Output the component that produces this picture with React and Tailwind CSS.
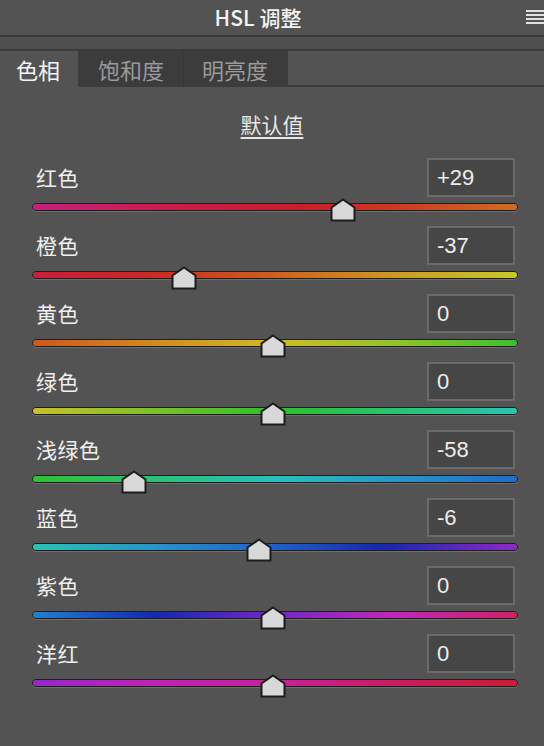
import React from "react";

const rows = [
  { label: "红色", value: 29, grad: "bg-[linear-gradient(to_right,#c4207e,#cc1c48_30%,#cc1c2c_55%,#cc3a22_75%,#d06c22)]" },
  { label: "橙色", value: -37, grad: "bg-[linear-gradient(to_right,#cc1c3a,#cc2a22_25%,#d0601e_50%,#cc9a22_75%,#c8c828)]" },
  { label: "黄色", value: 0, grad: "bg-[linear-gradient(to_right,#d0561e,#d08a20_25%,#d0bc22_50%,#90c428_75%,#3cc030)]" },
  { label: "绿色", value: 0, grad: "bg-[linear-gradient(to_right,#c8c028,#7cc02a_25%,#2ec02c_50%,#28c470_75%,#2ac4b4)]" },
  { label: "浅绿色", value: -58, grad: "bg-[linear-gradient(to_right,#30c030,#2cc078_25%,#28c0bc_50%,#2896c8_75%,#206cc8)]" },
  { label: "蓝色", value: -6, grad: "bg-[linear-gradient(to_right,#28c4b4,#2894c8_25%,#2060c8_50%,#1428b0_72%,#9028c8)]" },
  { label: "紫色", value: 0, grad: "bg-[linear-gradient(to_right,#2082d0,#1428b4_25%,#7428c8_50%,#c228b8_75%,#d02064)]" },
  { label: "洋红", value: 0, grad: "bg-[linear-gradient(to_right,#9428c8,#c024b4_25%,#c8209a_50%,#cc1c62_75%,#cc1c34)]" },
];

const fmt = (v) => (v > 0 ? `+${v}` : `${v}`);

function Thumb({ value }) {
  const center = 241 + value * 2.4;
  return (
    <svg
      width="26"
      height="24"
      viewBox="0 0 26 24"
      className="absolute top-[-5px]"
      style={{ left: `${center - 13}px` }}
    >
      <polygon
        points="13,1.5 24.5,9.5 24.5,22.5 1.5,22.5 1.5,9.5"
        fill="#d8d8d8"
        stroke="#1c1c1c"
        strokeWidth="2"
        strokeLinejoin="miter"
      />
    </svg>
  );
}

function Row({ label, value, grad }) {
  return (
    <div className="h-[68px] flex flex-col">
      <div className="h-[39px] flex items-center justify-between pl-[36px] pr-[29px]">
        <span className="text-[21px] leading-none text-[#f0f0f0] tracking-[0.5px]">{label}</span>
        <div className="w-[88px] h-[39px] border-2 border-[#6a6a6a] bg-[#464646] flex items-center pl-[8px]">
          <span className="text-[22px] leading-none text-[#ececec] font-['Liberation_Sans',sans-serif]">
            {fmt(value)}
          </span>
        </div>
      </div>
      <div className="relative ml-[32px] mr-[26px] mt-[6px] h-[8px]">
        <div className="absolute inset-0 rounded-full border border-[#1e1e1e] shadow-[0_1px_0_#6e6e6e] overflow-hidden">
          <div className={`w-full h-full ${grad}`} />
        </div>
        <Thumb value={value} />
      </div>
    </div>
  );
}

export default function App() {
  return (
    <div className="w-[544px] h-[746px] bg-[#535353] overflow-hidden font-['Noto_Sans_CJK_SC',sans-serif] select-none">
      {/* title bar */}
      <div className="relative h-[35px] flex items-center justify-center pr-[28px]">
        <span className="text-[21px] font-medium text-[#f2f2f2] leading-none">HSL 调整</span>
        <div className="absolute right-0 top-[10px] w-[18px] flex flex-col gap-[2px]">
          <div className="h-[2px] bg-[#e0e0e0]" />
          <div className="h-[2px] bg-[#e0e0e0]" />
          <div className="h-[2px] bg-[#e0e0e0]" />
          <div className="h-[2px] bg-[#e0e0e0]" />
        </div>
      </div>
      <div className="h-[2px] bg-[#383838]" />
      <div className="h-[12px] bg-[#4f4f4f]" />
      <div className="h-[2px] bg-[#3a3a3a]" />
      {/* tabs */}
      <div className="h-[36px] flex">
        <div className="w-[78px] flex items-center pl-[16px]">
          <span className="text-[22px] leading-none text-[#f4f4f4]">色相</span>
        </div>
        <div className="w-[105px] bg-[#3c3c3c] flex items-center pl-[20px]">
          <span className="text-[22px] leading-none text-[#9a9a9a]">饱和度</span>
        </div>
        <div className="w-[105px] bg-[#3c3c3c] border-l border-[#363636] flex items-center pl-[18px]">
          <span className="text-[22px] leading-none text-[#9a9a9a]">明亮度</span>
        </div>
        <div className="flex-1 border-b-2 border-[#3a3a3a]" />
      </div>
      {/* default link */}
      <div className="h-[71px] flex justify-center pt-[23px]">
        <span className="text-[21px] leading-[28px] h-[30px] text-[#e8e8e8] underline underline-offset-[4px] decoration-[1.5px]">
          默认值
        </span>
      </div>
      {/* rows */}
      <div className="flex flex-col">
        {rows.map((r) => (
          <Row key={r.label} {...r} />
        ))}
      </div>
    </div>
  );
}
